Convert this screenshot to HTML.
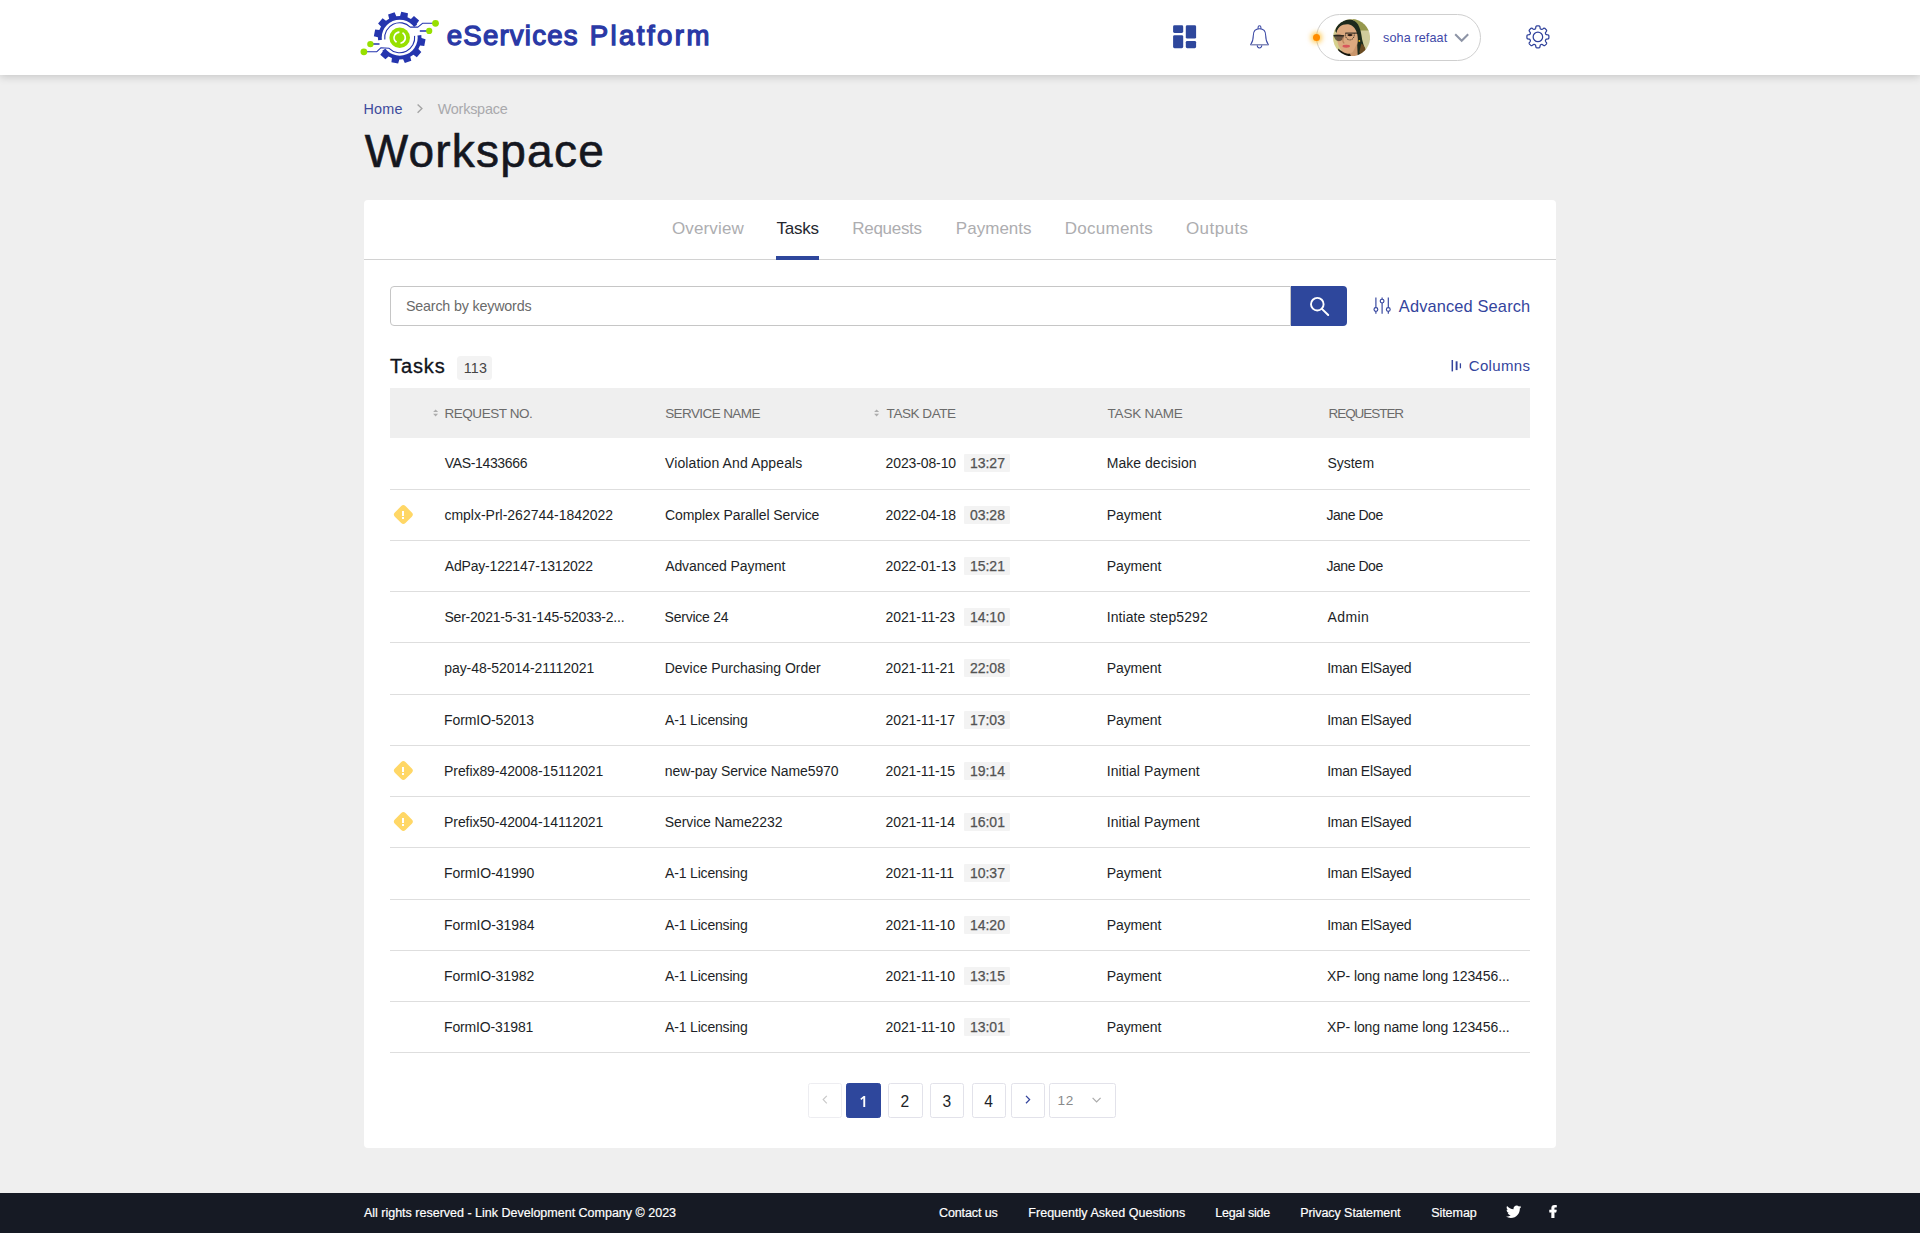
<!DOCTYPE html>
<html lang="en">
<head>
<meta charset="utf-8">
<title>Workspace</title>
<style>
*{box-sizing:border-box;margin:0;padding:0}
html,body{width:1920px;height:1233px;overflow:hidden;background:#efefef;font-family:"Liberation Sans",sans-serif;color:#1a1c26}
body{position:relative}
.abs{position:absolute}
.t{position:absolute;white-space:nowrap}
#hdr{position:absolute;left:0;top:0;width:1920px;height:75px;background:#fff;box-shadow:0 2px 8px rgba(0,0,0,.17)}
#userpill{position:absolute;left:1316px;top:14px;width:165px;height:47px;border:1px solid #cfcfcf;border-radius:24px;background:#fff}
#dot{position:absolute;left:1313px;top:34px;width:7px;height:7px;border-radius:50%;background:#ff8c00;box-shadow:0 0 5px 2px rgba(255,176,0,.65)}
#card{position:absolute;left:364px;top:200px;width:1192px;height:948px;background:#fff;border-radius:4px}
#tabline{position:absolute;left:364px;top:259px;width:1192px;height:1px;background:#d2d2d2}
#tabbar{position:absolute;left:776px;top:256px;width:43px;height:4px;background:#2e479c}
#sinput{position:absolute;left:390px;top:286px;width:901px;height:40px;border:1px solid #c6c6c6;border-radius:4px 0 0 4px;background:#fff}
#sbtn{position:absolute;left:1291px;top:286px;width:56px;height:40px;background:#2e479c;border-radius:0 4px 4px 0}
#cnt{position:absolute;left:457px;top:356px;width:35px;height:23.5px;border-radius:3.5px;background:#f3f3f3}
#thead{position:absolute;left:390px;top:388px;width:1140px;height:50px;background:#efefef}
.row{position:absolute;left:390px;width:1140px;height:1px;background:#dedede}
.tm{position:absolute;background:#f3f3f3;border-radius:1px}
.warn{position:absolute;width:14.7px;height:14.7px;border-radius:3px;background:#ffd766;transform:rotate(45deg)}
.wb{position:absolute;width:2px;height:5.6px;background:#fff}
.wd{position:absolute;width:2px;height:1.5px;background:#fff}
.pg{position:absolute;top:1083px;height:34.5px;border:1px solid #e2e2ea;border-radius:2.5px;background:#fff}
#ftr{position:absolute;left:0;top:1193px;width:1920px;height:40px;background:#161a24}
.chev{position:absolute}
</style>
</head>
<body>
<div id="hdr"></div>
<svg class="abs" style="left:0;top:0" width="460" height="74" viewBox="0 0 460 74">
<path d="M421.23,34.29 L425.09,32.58 L422.86,26.10 L418.77,27.13 L416.64,23.98 L419.13,20.57 L413.96,16.08 L410.93,19.01 L407.51,17.35 L407.96,13.15 L401.24,11.85 L400.08,15.90 L396.29,16.17 L394.58,12.31 L388.10,14.54 L389.13,18.63 L385.98,20.76 L382.57,18.27 L378.08,23.44 L381.01,26.47 L379.35,29.89 L375.15,29.44 L373.85,36.16 L377.90,37.32 L378.17,41.11 L374.31,42.82 L376.54,49.30 L380.63,48.27 L382.76,51.42 L380.27,54.83 L385.44,59.32 L388.47,56.39 L391.89,58.05 L391.44,62.25 L398.16,63.55 L399.32,59.50 L403.11,59.23 L404.82,63.09 L411.30,60.86 L410.27,56.77 L413.42,54.64 L416.83,57.13 L421.32,51.96 L418.39,48.93 L420.05,45.51 L424.25,45.96 L425.55,39.24 L421.50,38.08Z M417.70,37.70 A18.0,18.0 0 1 0 381.70,37.70 A18.0,18.0 0 1 0 417.70,37.70Z" fill="#2535ae" fill-rule="evenodd"/>
<path d="M399.7,37.7 L429.48,34.04 A30,30 0 0 0 423.66,19.65Z" fill="#fff"/><path d="M399.7,37.7 L369.92,41.36 A30,30 0 0 0 375.74,55.75Z" fill="#fff"/>
<g fill="none" stroke="#2535ae" stroke-width="1.1" stroke-linejoin="round">
<path d="M435.5,23.3 L422.5,23.3 L417.9,27.1 L410.31,27.09 A15.0,15.0 0 0 0 384.81,39.53"/>
<path d="M363.9,51.8 L376.6,51.8 L380.8,47.8 L389.09,48.31 A15.0,15.0 0 0 0 414.59,35.87"/>
<path d="M429.2,30.9 L419.8,30.9 M370.4,44.1 L379.5,44.1" stroke-width="1.5"/>
</g>
<g fill="#97e000">
<circle cx="435.5" cy="23.3" r="3.4"/><circle cx="429.2" cy="30.9" r="3.1"/>
<circle cx="370.4" cy="44.1" r="3.2"/><circle cx="363.9" cy="51.8" r="3.4"/>
<circle cx="399.7" cy="37.7" r="10.3"/>
</g>
<circle cx="399.7" cy="37.7" r="5.6" fill="none" stroke="#fff" stroke-width="1.7" stroke-dasharray="13.5 4.1" transform="rotate(-60 399.7 37.7)"/>
</svg>
<div id="userpill"></div>
<div id="dot"></div>
<svg class="abs" style="left:1160px;top:14px" width="120" height="46" viewBox="1160 14 120 46">
<g fill="#2e479c">
<rect x="1173.1" y="25.3" width="10.1" height="7.6" rx="1.4"/>
<rect x="1173.1" y="35.2" width="10.1" height="13" rx="1.4"/>
<rect x="1185.8" y="25.3" width="10.3" height="13.3" rx="1.4"/>
<rect x="1185.8" y="40.9" width="10.3" height="7.3" rx="1.4"/>
</g>
<g fill="none" stroke="#3a48a4" stroke-width="1.05" stroke-linejoin="round">
<path d="M1250.6,44.8 C1252.6,42.2 1253.3,40 1253.3,35.6 C1253.3,31 1256,28.8 1259.5,28.8 C1263,28.8 1265.7,31 1265.7,35.6 C1265.7,40 1266.4,42.2 1268.4,44.8 Z"/>
<path d="M1258.1,28.9 V27.3 A1.4,1.6 0 0 1 1260.9,27.3 V28.9"/>
<path d="M1257.2,45.3 A2.3,2.6 0 0 0 1261.8,45.3"/>
</g>
<path d="M1250.8,44.6 H1268.2" stroke="#8a90b8" stroke-width="1.1"/>
</svg>
<svg class="abs" style="left:1520px;top:20px" width="36" height="34" viewBox="1520 20 36 34">
<path d="M1537.90,25.90 L1538.19,25.90 L1538.48,25.92 L1538.76,25.94 L1539.05,25.98 L1539.33,26.05 L1539.60,26.19 L1539.83,26.50 L1539.99,27.07 L1540.08,27.82 L1540.18,28.39 L1540.32,28.72 L1540.50,28.90 L1540.69,29.01 L1540.89,29.11 L1541.09,29.19 L1541.29,29.27 L1541.50,29.35 L1541.72,29.40 L1541.97,29.40 L1542.30,29.27 L1542.78,28.93 L1543.37,28.48 L1543.89,28.18 L1544.27,28.13 L1544.56,28.22 L1544.81,28.37 L1545.04,28.54 L1545.26,28.73 L1545.47,28.92 L1545.68,29.12 L1545.88,29.33 L1546.07,29.54 L1546.26,29.76 L1546.43,29.99 L1546.58,30.24 L1546.67,30.53 L1546.62,30.91 L1546.32,31.43 L1545.87,32.02 L1545.53,32.50 L1545.40,32.83 L1545.40,33.08 L1545.45,33.30 L1545.53,33.51 L1545.61,33.71 L1545.69,33.91 L1545.79,34.11 L1545.90,34.30 L1546.08,34.48 L1546.41,34.62 L1546.98,34.72 L1547.73,34.81 L1548.30,34.97 L1548.61,35.20 L1548.75,35.47 L1548.82,35.75 L1548.86,36.04 L1548.88,36.32 L1548.90,36.61 L1548.90,36.90 L1548.90,37.19 L1548.88,37.48 L1548.86,37.76 L1548.82,38.05 L1548.75,38.33 L1548.61,38.60 L1548.30,38.83 L1547.73,38.99 L1546.98,39.08 L1546.41,39.18 L1546.08,39.32 L1545.90,39.50 L1545.79,39.69 L1545.69,39.89 L1545.61,40.09 L1545.53,40.29 L1545.45,40.50 L1545.40,40.72 L1545.40,40.97 L1545.53,41.30 L1545.87,41.78 L1546.32,42.37 L1546.62,42.89 L1546.67,43.27 L1546.58,43.56 L1546.43,43.81 L1546.26,44.04 L1546.07,44.26 L1545.88,44.47 L1545.68,44.68 L1545.47,44.88 L1545.26,45.07 L1545.04,45.26 L1544.81,45.43 L1544.56,45.58 L1544.27,45.67 L1543.89,45.62 L1543.37,45.32 L1542.78,44.87 L1542.30,44.53 L1541.97,44.40 L1541.72,44.40 L1541.50,44.45 L1541.29,44.53 L1541.09,44.61 L1540.89,44.69 L1540.69,44.79 L1540.50,44.90 L1540.32,45.08 L1540.18,45.41 L1540.08,45.98 L1539.99,46.73 L1539.83,47.30 L1539.60,47.61 L1539.33,47.75 L1539.05,47.82 L1538.76,47.86 L1538.48,47.88 L1538.19,47.90 L1537.90,47.90 L1537.61,47.90 L1537.32,47.88 L1537.04,47.86 L1536.75,47.82 L1536.47,47.75 L1536.20,47.61 L1535.97,47.30 L1535.81,46.73 L1535.72,45.98 L1535.62,45.41 L1535.48,45.08 L1535.30,44.90 L1535.11,44.79 L1534.91,44.69 L1534.71,44.61 L1534.51,44.53 L1534.30,44.45 L1534.08,44.40 L1533.83,44.40 L1533.50,44.53 L1533.02,44.87 L1532.43,45.32 L1531.91,45.62 L1531.53,45.67 L1531.24,45.58 L1530.99,45.43 L1530.76,45.26 L1530.54,45.07 L1530.33,44.88 L1530.12,44.68 L1529.92,44.47 L1529.73,44.26 L1529.54,44.04 L1529.37,43.81 L1529.22,43.56 L1529.13,43.27 L1529.18,42.89 L1529.48,42.37 L1529.93,41.78 L1530.27,41.30 L1530.40,40.97 L1530.40,40.72 L1530.35,40.50 L1530.27,40.29 L1530.19,40.09 L1530.11,39.89 L1530.01,39.69 L1529.90,39.50 L1529.72,39.32 L1529.39,39.18 L1528.82,39.08 L1528.07,38.99 L1527.50,38.83 L1527.19,38.60 L1527.05,38.33 L1526.98,38.05 L1526.94,37.76 L1526.92,37.48 L1526.90,37.19 L1526.90,36.90 L1526.90,36.61 L1526.92,36.32 L1526.94,36.04 L1526.98,35.75 L1527.05,35.47 L1527.19,35.20 L1527.50,34.97 L1528.07,34.81 L1528.82,34.72 L1529.39,34.62 L1529.72,34.48 L1529.90,34.30 L1530.01,34.11 L1530.11,33.91 L1530.19,33.71 L1530.27,33.51 L1530.35,33.30 L1530.40,33.08 L1530.40,32.83 L1530.27,32.50 L1529.93,32.02 L1529.48,31.43 L1529.18,30.91 L1529.13,30.53 L1529.22,30.24 L1529.37,29.99 L1529.54,29.76 L1529.73,29.54 L1529.92,29.33 L1530.12,29.12 L1530.33,28.92 L1530.54,28.73 L1530.76,28.54 L1530.99,28.37 L1531.24,28.22 L1531.53,28.13 L1531.91,28.18 L1532.43,28.48 L1533.02,28.93 L1533.50,29.27 L1533.83,29.40 L1534.08,29.40 L1534.30,29.35 L1534.51,29.27 L1534.71,29.19 L1534.91,29.11 L1535.11,29.01 L1535.30,28.90 L1535.48,28.72 L1535.62,28.39 L1535.72,27.82 L1535.81,27.07 L1535.97,26.50 L1536.20,26.19 L1536.47,26.05 L1536.75,25.98 L1537.04,25.94 L1537.32,25.92 L1537.61,25.90Z" fill="none" stroke="#2f419b" stroke-width="1.25"/>
<circle cx="1537.9" cy="36.9" r="4.75" fill="none" stroke="#2f419b" stroke-width="1.25"/>
</svg>
<svg class="abs" style="left:1450px;top:30px" width="24" height="16" viewBox="1450 30 24 16">
<path d="M1455.2,34.2 L1461.7,40.8 L1468.2,34.2" fill="none" stroke="#8d94a6" stroke-width="2"/>
</svg>
<svg class="abs" style="left:1333px;top:18.7px" width="37.1" height="37.3" viewBox="85 75 1038 1045">
<defs><clipPath id="av"><ellipse cx="604" cy="597" rx="519" ry="522"/></clipPath>
<filter id="bl" x="-10%" y="-10%" width="120%" height="120%"><feGaussianBlur stdDeviation="16"/></filter></defs>
<g clip-path="url(#av)"><g filter="url(#bl)">
<rect x="60" y="50" width="1100" height="1100" fill="#cfc98f"/>
<path d="M600,50 H1160 V420 H860 C800,260 700,150 600,50Z" fill="#96984d"/>
<path d="M860,400 H1160 V900 H960 C930,700 900,560 860,400Z" fill="#d0cc9c"/>
<path d="M60,560 H200 L260,1150 H60Z" fill="#d6d08c"/>
<path d="M150,420 C160,250 330,90 560,90 C760,100 850,300 880,520 C900,700 960,860 1010,1000 L900,1150 H700 L760,700 C740,480 660,300 520,250 C360,230 230,300 190,470Z" fill="#1d2a1e"/>
<path d="M880,760 C960,800 1000,900 1010,1000 L880,1140 L820,1000Z" fill="#6a4c20"/>
<path d="M185,470 C200,300 360,200 540,230 C700,270 780,460 780,640 C790,760 740,900 640,1000 C560,1060 420,1060 330,960 C230,840 170,640 185,470Z" fill="#dba97f"/>
<path d="M330,960 C420,1060 560,1060 640,1000 L760,760 L780,1150 H300Z" fill="#c9966c"/>
<path d="M230,900 C300,960 420,1060 560,1050 L600,1150 H240Z" fill="#15140f"/>
<path d="M100,520 C180,500 300,500 390,540 C380,640 330,700 250,700 C170,690 120,620 100,520Z" fill="#3a3126" opacity=".7"/>
<path d="M90,545 L400,545 M430,470 L770,470" stroke="#10120e" stroke-width="26" fill="none"/>
<path d="M440,480 C420,580 470,660 560,662 C640,660 690,580 680,480" stroke="#10120e" stroke-width="22" fill="none" stroke-dasharray="30 22"/>
<ellipse cx="560" cy="525" rx="75" ry="32" fill="#2a1c14"/>
<ellipse cx="455" cy="838" rx="105" ry="40" fill="#d8565b"/>
<circle cx="822" cy="688" r="26" fill="#f5c21a"/>
<path d="M365,600 C350,680 350,720 400,760" stroke="#b9835c" stroke-width="30" fill="none"/>
</g></g></svg>
<svg class="abs" style="left:414px;top:102px" width="12" height="14" viewBox="414 102 12 14"><path d="M417.6,104.4 L421.9,108.6 L417.6,112.8" fill="none" stroke="#a5a5a5" stroke-width="1.4"/></svg>
<div id="card"></div>
<div id="tabline"></div>
<div id="tabbar"></div>
<div id="sinput"></div>
<div id="sbtn"></div>
<svg class="abs" style="left:1305px;top:293px" width="30" height="26" viewBox="1305 293 30 26">
<circle cx="1317.3" cy="304.2" r="6.3" fill="none" stroke="#fff" stroke-width="1.9"/>
<path d="M1321.9,308.9 L1328.2,315" stroke="#fff" stroke-width="2" stroke-linecap="round"/></svg>
<svg class="abs" style="left:1370px;top:294px" width="24" height="24" viewBox="1370 294 24 24">
<g fill="none" stroke="#33449d" stroke-width="1.15">
<path d="M1375.9,297.5 V307.6 M1375.9,311.4 V313.7 M1382.1,297.5 V299.2 M1382.1,303 V313.7 M1388.3,297.5 V307.6 M1388.3,311.4 V313.7"/>
<circle cx="1375.9" cy="309.5" r="1.9"/><circle cx="1382.1" cy="301.1" r="1.9"/><circle cx="1388.3" cy="309.5" r="1.9"/>
</g></svg>
<svg class="abs" style="left:1448px;top:357px" width="18" height="18" viewBox="1448 357 18 18">
<g stroke="#33449d" stroke-width="1.5"><path d="M1452.3,360 V371.4"/><path d="M1456.6,361.3 V370.1" stroke-width="1.9"/><path d="M1460.4,363.3 V368.3" stroke-width="1.3"/></g></svg>
<div id="cnt"></div>
<div id="thead"></div>
<svg class="abs" style="left:431.5px;top:408px" width="8" height="10" viewBox="0 0 8 10"><path d="M1.1,4 L3.6,1.4 L6.1,4Z M1.1,5.8 L3.6,8.4 L6.1,5.8Z" fill="#adadad"/></svg>
<svg class="abs" style="left:873px;top:408px" width="8" height="10" viewBox="0 0 8 10"><path d="M1.1,4 L3.6,1.4 L6.1,4Z M1.1,5.8 L3.6,8.4 L6.1,5.8Z" fill="#adadad"/></svg>
<div class="tm" style="left:964px;top:454.25px;width:46px;height:17.5px"></div>
<div class="row" style="top:489px"></div>
<div class="tm" style="left:964px;top:506.25px;width:46px;height:17.5px"></div>
<div class="row" style="top:540px"></div>
<div class="warn" style="left:395.75px;top:507.20px"></div><div class="wb" style="left:402.1px;top:510.50px"></div><div class="wd" style="left:402.1px;top:517.40px"></div>
<div class="tm" style="left:964px;top:557.25px;width:46px;height:17.5px"></div>
<div class="row" style="top:591px"></div>
<div class="tm" style="left:964px;top:608.25px;width:46px;height:17.5px"></div>
<div class="row" style="top:642px"></div>
<div class="tm" style="left:964px;top:659.25px;width:46px;height:17.5px"></div>
<div class="row" style="top:694px"></div>
<div class="tm" style="left:964px;top:711.25px;width:46px;height:17.5px"></div>
<div class="row" style="top:745px"></div>
<div class="tm" style="left:964px;top:762.25px;width:46px;height:17.5px"></div>
<div class="row" style="top:796px"></div>
<div class="warn" style="left:395.75px;top:763.20px"></div><div class="wb" style="left:402.1px;top:766.50px"></div><div class="wd" style="left:402.1px;top:773.40px"></div>
<div class="tm" style="left:964px;top:813.25px;width:46px;height:17.5px"></div>
<div class="row" style="top:847px"></div>
<div class="warn" style="left:395.75px;top:814.20px"></div><div class="wb" style="left:402.1px;top:817.50px"></div><div class="wd" style="left:402.1px;top:824.40px"></div>
<div class="tm" style="left:964px;top:864.25px;width:46px;height:17.5px"></div>
<div class="row" style="top:899px"></div>
<div class="tm" style="left:964px;top:916.25px;width:46px;height:17.5px"></div>
<div class="row" style="top:950px"></div>
<div class="tm" style="left:964px;top:967.25px;width:46px;height:17.5px"></div>
<div class="row" style="top:1001px"></div>
<div class="tm" style="left:964px;top:1018.25px;width:46px;height:17.5px"></div>
<div class="row" style="top:1052px"></div>
<div class="pg" style="left:807.5px;width:34px;border-color:#ededf1"></div>
<div class="pg" style="left:846px;width:35px;background:#2e479c;border-color:#2e479c"></div>
<div class="pg" style="left:888px;width:35px"></div>
<div class="pg" style="left:930px;width:34px"></div>
<div class="pg" style="left:972px;width:34px"></div>
<div class="pg" style="left:1011px;width:34px"></div>
<div class="pg" style="left:1049px;width:67px"></div>
<svg class="abs" style="left:815px;top:1090px" width="300" height="20" viewBox="815 1090 300 20">
<path d="M826.8,1095.9 L823.2,1099.6 L826.8,1103.3" fill="none" stroke="#c9c9c9" stroke-width="1.2"/>
<path d="M865.2,1095.9 V1106.9 H863.3 V1098.3 L861.3,1100 L860.3,1098.8 L863.6,1095.9Z" fill="#fff"/>
<path d="M1026,1095.9 L1029.6,1099.6 L1026,1103.3" fill="none" stroke="#33449d" stroke-width="1.3"/>
<path d="M1092.6,1097.9 L1096.6,1101.9 L1100.6,1097.9" fill="none" stroke="#aaa" stroke-width="1.2"/>
</svg>
<div id="ftr"></div>
<svg class="abs" style="left:1505.9px;top:1203.8px" width="15.4" height="15.4" viewBox="0 0 512 512"><path fill="#fff" d="M459.37 151.716c.325 4.548.325 9.097.325 13.645 0 138.72-105.583 298.558-298.558 298.558-59.452 0-114.68-17.219-161.137-47.106 8.447.974 16.568 1.299 25.34 1.299 49.055 0 94.213-16.568 130.274-44.832-46.132-.975-84.792-31.188-98.112-72.772 6.498.974 12.995 1.624 19.818 1.624 9.421 0 18.843-1.3 27.614-3.573-48.081-9.747-84.143-51.98-84.143-102.985v-1.299c13.969 7.797 30.214 12.67 47.431 13.319-28.264-18.843-46.781-51.005-46.781-87.391 0-19.492 5.197-37.36 14.294-52.954 51.655 63.675 129.3 105.258 216.365 109.807-1.624-7.797-2.599-15.918-2.599-24.04 0-57.828 46.782-104.934 104.934-104.934 30.213 0 57.502 12.67 76.67 33.137 23.715-4.548 46.456-13.32 66.599-25.34-7.798 24.366-24.366 44.833-46.132 57.827 21.117-2.273 41.584-8.122 60.426-16.243-14.292 20.791-32.161 39.308-52.628 54.253z"/></svg>
<svg class="abs" style="left:1549.4px;top:1205.2px" width="8.1" height="12.9" viewBox="0 0 320 512" preserveAspectRatio="none"><path fill="#fff" stroke="#fff" stroke-width="22" d="M279.14 288l14.22-92.66h-88.91v-60.13c0-25.35 12.42-50.06 52.24-50.06h40.42V6.26S260.43 0 225.36 0c-73.22 0-121.08 44.38-121.08 124.72v70.62H22.89V288h81.39v224h100.17V288z"/></svg>
<div class="t" style="left:446.84px;top:19px;font-size:27.6px;line-height:33px;color:#2a39a6;letter-spacing:1.19px;-webkit-text-stroke:1.3px #2a39a6;">eServices</div>
<div class="t" style="left:589.69px;top:19px;font-size:27.6px;line-height:33px;color:#2a39a6;letter-spacing:2.43px;-webkit-text-stroke:1.3px #2a39a6;">Platform</div>
<div class="t" style="left:1383.01px;top:31px;font-size:12.6px;line-height:15px;color:#3f48a8;letter-spacing:0.12px;">soha refaat</div>
<div class="t" style="left:363.49px;top:101px;font-size:14.4px;line-height:17px;color:#3d4a9c;letter-spacing:0.17px;">Home</div>
<div class="t" style="left:437.66px;top:101px;font-size:14.4px;line-height:17px;color:#a9a9ac;letter-spacing:-0.21px;">Workspace</div>
<div class="t" style="left:364.72px;top:124px;font-size:46px;line-height:55px;color:#15171f;letter-spacing:1.22px;-webkit-text-stroke:0.6px #15171f;">Workspace</div>
<div class="t" style="left:671.97px;top:219px;font-size:17px;line-height:20px;color:#adadb0;letter-spacing:0.14px;">Overview</div>
<div class="t" style="left:852.26px;top:219px;font-size:17px;line-height:20px;color:#adadb0;letter-spacing:-0.29px;">Requests</div>
<div class="t" style="left:955.82px;top:219px;font-size:17px;line-height:20px;color:#adadb0;letter-spacing:0.03px;">Payments</div>
<div class="t" style="left:1064.84px;top:219px;font-size:17px;line-height:20px;color:#adadb0;letter-spacing:0.24px;">Documents</div>
<div class="t" style="left:1185.94px;top:219px;font-size:17px;line-height:20px;color:#adadb0;letter-spacing:0.43px;">Outputs</div>
<div class="t" style="left:776.58px;top:219px;font-size:17px;line-height:20px;color:#25272f;letter-spacing:-0.26px;">Tasks</div>
<div class="t" style="left:405.93px;top:298px;font-size:14.3px;line-height:17px;color:#6a6a6a;letter-spacing:-0.18px;">Search by keywords</div>
<div class="t" style="left:1398.84px;top:296px;font-size:16.4px;line-height:20px;color:#33449d;letter-spacing:0.14px;">Advanced Search</div>
<div class="t" style="left:390.09px;top:354px;font-size:20px;line-height:24px;color:#11131b;letter-spacing:0.88px;-webkit-text-stroke:0.35px #11131b;">Tasks</div>
<div class="t" style="left:463.71px;top:360px;font-size:14.3px;line-height:17px;color:#444;letter-spacing:0.25px;">113</div>
<div class="t" style="left:1468.83px;top:357px;font-size:15px;line-height:18px;color:#33449d;letter-spacing:0.31px;">Columns</div>
<div class="t" style="left:444.48px;top:406px;font-size:13.5px;line-height:16px;color:#6b6b6b;letter-spacing:-0.45px;">REQUEST NO.</div>
<div class="t" style="left:665.17px;top:406px;font-size:13.5px;line-height:16px;color:#6b6b6b;letter-spacing:-0.59px;">SERVICE NAME</div>
<div class="t" style="left:886.62px;top:406px;font-size:13.5px;line-height:16px;color:#6b6b6b;letter-spacing:-0.45px;">TASK DATE</div>
<div class="t" style="left:1107.62px;top:406px;font-size:13.5px;line-height:16px;color:#6b6b6b;letter-spacing:-0.24px;">TASK NAME</div>
<div class="t" style="left:1328.55px;top:406px;font-size:13.5px;line-height:16px;color:#6b6b6b;letter-spacing:-1.06px;">REQUESTER</div>
<div class="t" style="left:444.82px;top:455px;font-size:14px;line-height:17px;color:#1d1f27;letter-spacing:-0.35px;">VAS-1433666</div>
<div class="t" style="left:665.05px;top:455px;font-size:14px;line-height:17px;color:#1d1f27;letter-spacing:0.10px;">Violation And Appeals</div>
<div class="t" style="left:885.55px;top:455px;font-size:14px;line-height:17px;color:#1d1f27;letter-spacing:-0.12px;">2023-08-10</div>
<div class="t" style="left:969.90px;top:455px;font-size:14px;line-height:17px;color:#525252;-webkit-text-stroke:0.25px #525252;">13:27</div>
<div class="t" style="left:1106.75px;top:455px;font-size:14px;line-height:17px;color:#1d1f27;letter-spacing:0.03px;">Make decision</div>
<div class="t" style="left:1327.39px;top:455px;font-size:14px;line-height:17px;color:#1d1f27;letter-spacing:-0.00px;">System</div>
<div class="t" style="left:444.46px;top:507px;font-size:14px;line-height:17px;color:#1d1f27;letter-spacing:-0.01px;">cmplx-Prl-262744-1842022</div>
<div class="t" style="left:665.05px;top:507px;font-size:14px;line-height:17px;color:#1d1f27;letter-spacing:-0.09px;">Complex Parallel Service</div>
<div class="t" style="left:885.55px;top:507px;font-size:14px;line-height:17px;color:#1d1f27;letter-spacing:-0.12px;">2022-04-18</div>
<div class="t" style="left:969.90px;top:507px;font-size:14px;line-height:17px;color:#525252;-webkit-text-stroke:0.25px #525252;">03:28</div>
<div class="t" style="left:1106.75px;top:507px;font-size:14px;line-height:17px;color:#1d1f27;letter-spacing:-0.11px;">Payment</div>
<div class="t" style="left:1326.50px;top:507px;font-size:14px;line-height:17px;color:#1d1f27;letter-spacing:-0.46px;">Jane Doe</div>
<div class="t" style="left:444.82px;top:558px;font-size:14px;line-height:17px;color:#1d1f27;letter-spacing:-0.19px;">AdPay-122147-1312022</div>
<div class="t" style="left:665.15px;top:558px;font-size:14px;line-height:17px;color:#1d1f27;letter-spacing:-0.08px;">Advanced Payment</div>
<div class="t" style="left:885.55px;top:558px;font-size:14px;line-height:17px;color:#1d1f27;letter-spacing:-0.12px;">2022-01-13</div>
<div class="t" style="left:969.90px;top:558px;font-size:14px;line-height:17px;color:#525252;-webkit-text-stroke:0.25px #525252;">15:21</div>
<div class="t" style="left:1106.75px;top:558px;font-size:14px;line-height:17px;color:#1d1f27;letter-spacing:-0.11px;">Payment</div>
<div class="t" style="left:1326.50px;top:558px;font-size:14px;line-height:17px;color:#1d1f27;letter-spacing:-0.46px;">Jane Doe</div>
<div class="t" style="left:444.49px;top:609px;font-size:14px;line-height:17px;color:#1d1f27;letter-spacing:-0.22px;">Ser-2021-5-31-145-52033-2...</div>
<div class="t" style="left:664.61px;top:609px;font-size:14px;line-height:17px;color:#1d1f27;letter-spacing:-0.25px;">Service 24</div>
<div class="t" style="left:885.55px;top:609px;font-size:14px;line-height:17px;color:#1d1f27;letter-spacing:-0.12px;">2021-11-23</div>
<div class="t" style="left:969.90px;top:609px;font-size:14px;line-height:17px;color:#525252;-webkit-text-stroke:0.25px #525252;">14:10</div>
<div class="t" style="left:1106.67px;top:609px;font-size:14px;line-height:17px;color:#1d1f27;letter-spacing:0.10px;">Intiate step5292</div>
<div class="t" style="left:1327.60px;top:609px;font-size:14px;line-height:17px;color:#1d1f27;letter-spacing:0.37px;">Admin</div>
<div class="t" style="left:444.23px;top:660px;font-size:14px;line-height:17px;color:#1d1f27;letter-spacing:-0.06px;">pay-48-52014-21112021</div>
<div class="t" style="left:664.73px;top:660px;font-size:14px;line-height:17px;color:#1d1f27;letter-spacing:-0.02px;">Device Purchasing Order</div>
<div class="t" style="left:885.55px;top:660px;font-size:14px;line-height:17px;color:#1d1f27;letter-spacing:-0.12px;">2021-11-21</div>
<div class="t" style="left:969.90px;top:660px;font-size:14px;line-height:17px;color:#525252;-webkit-text-stroke:0.25px #525252;">22:08</div>
<div class="t" style="left:1106.75px;top:660px;font-size:14px;line-height:17px;color:#1d1f27;letter-spacing:-0.11px;">Payment</div>
<div class="t" style="left:1327.17px;top:660px;font-size:14px;line-height:17px;color:#1d1f27;letter-spacing:-0.26px;">Iman ElSayed</div>
<div class="t" style="left:444.04px;top:712px;font-size:14px;line-height:17px;color:#1d1f27;letter-spacing:-0.09px;">FormIO-52013</div>
<div class="t" style="left:665.10px;top:712px;font-size:14px;line-height:17px;color:#1d1f27;letter-spacing:-0.18px;">A-1 Licensing</div>
<div class="t" style="left:885.55px;top:712px;font-size:14px;line-height:17px;color:#1d1f27;letter-spacing:-0.12px;">2021-11-17</div>
<div class="t" style="left:969.90px;top:712px;font-size:14px;line-height:17px;color:#525252;-webkit-text-stroke:0.25px #525252;">17:03</div>
<div class="t" style="left:1106.75px;top:712px;font-size:14px;line-height:17px;color:#1d1f27;letter-spacing:-0.11px;">Payment</div>
<div class="t" style="left:1327.17px;top:712px;font-size:14px;line-height:17px;color:#1d1f27;letter-spacing:-0.26px;">Iman ElSayed</div>
<div class="t" style="left:444.04px;top:763px;font-size:14px;line-height:17px;color:#1d1f27;letter-spacing:-0.07px;">Prefix89-42008-15112021</div>
<div class="t" style="left:664.80px;top:763px;font-size:14px;line-height:17px;color:#1d1f27;letter-spacing:-0.09px;">new-pay Service Name5970</div>
<div class="t" style="left:885.55px;top:763px;font-size:14px;line-height:17px;color:#1d1f27;letter-spacing:-0.12px;">2021-11-15</div>
<div class="t" style="left:969.90px;top:763px;font-size:14px;line-height:17px;color:#525252;-webkit-text-stroke:0.25px #525252;">19:14</div>
<div class="t" style="left:1106.67px;top:763px;font-size:14px;line-height:17px;color:#1d1f27;letter-spacing:0.09px;">Initial Payment</div>
<div class="t" style="left:1327.17px;top:763px;font-size:14px;line-height:17px;color:#1d1f27;letter-spacing:-0.26px;">Iman ElSayed</div>
<div class="t" style="left:444.04px;top:814px;font-size:14px;line-height:17px;color:#1d1f27;letter-spacing:-0.07px;">Prefix50-42004-14112021</div>
<div class="t" style="left:664.76px;top:814px;font-size:14px;line-height:17px;color:#1d1f27;letter-spacing:-0.09px;">Service Name2232</div>
<div class="t" style="left:885.55px;top:814px;font-size:14px;line-height:17px;color:#1d1f27;letter-spacing:-0.12px;">2021-11-14</div>
<div class="t" style="left:969.90px;top:814px;font-size:14px;line-height:17px;color:#525252;-webkit-text-stroke:0.25px #525252;">16:01</div>
<div class="t" style="left:1106.67px;top:814px;font-size:14px;line-height:17px;color:#1d1f27;letter-spacing:0.09px;">Initial Payment</div>
<div class="t" style="left:1327.17px;top:814px;font-size:14px;line-height:17px;color:#1d1f27;letter-spacing:-0.26px;">Iman ElSayed</div>
<div class="t" style="left:444.04px;top:865px;font-size:14px;line-height:17px;color:#1d1f27;letter-spacing:-0.08px;">FormIO-41990</div>
<div class="t" style="left:665.10px;top:865px;font-size:14px;line-height:17px;color:#1d1f27;letter-spacing:-0.18px;">A-1 Licensing</div>
<div class="t" style="left:885.55px;top:865px;font-size:14px;line-height:17px;color:#1d1f27;letter-spacing:-0.12px;">2021-11-11</div>
<div class="t" style="left:969.90px;top:865px;font-size:14px;line-height:17px;color:#525252;-webkit-text-stroke:0.25px #525252;">10:37</div>
<div class="t" style="left:1106.75px;top:865px;font-size:14px;line-height:17px;color:#1d1f27;letter-spacing:-0.11px;">Payment</div>
<div class="t" style="left:1327.17px;top:865px;font-size:14px;line-height:17px;color:#1d1f27;letter-spacing:-0.26px;">Iman ElSayed</div>
<div class="t" style="left:444.04px;top:917px;font-size:14px;line-height:17px;color:#1d1f27;letter-spacing:-0.04px;">FormIO-31984</div>
<div class="t" style="left:665.10px;top:917px;font-size:14px;line-height:17px;color:#1d1f27;letter-spacing:-0.18px;">A-1 Licensing</div>
<div class="t" style="left:885.55px;top:917px;font-size:14px;line-height:17px;color:#1d1f27;letter-spacing:-0.12px;">2021-11-10</div>
<div class="t" style="left:969.90px;top:917px;font-size:14px;line-height:17px;color:#525252;-webkit-text-stroke:0.25px #525252;">14:20</div>
<div class="t" style="left:1106.75px;top:917px;font-size:14px;line-height:17px;color:#1d1f27;letter-spacing:-0.11px;">Payment</div>
<div class="t" style="left:1327.17px;top:917px;font-size:14px;line-height:17px;color:#1d1f27;letter-spacing:-0.26px;">Iman ElSayed</div>
<div class="t" style="left:444.04px;top:968px;font-size:14px;line-height:17px;color:#1d1f27;letter-spacing:-0.08px;">FormIO-31982</div>
<div class="t" style="left:665.10px;top:968px;font-size:14px;line-height:17px;color:#1d1f27;letter-spacing:-0.18px;">A-1 Licensing</div>
<div class="t" style="left:885.55px;top:968px;font-size:14px;line-height:17px;color:#1d1f27;letter-spacing:-0.12px;">2021-11-10</div>
<div class="t" style="left:969.90px;top:968px;font-size:14px;line-height:17px;color:#525252;-webkit-text-stroke:0.25px #525252;">13:15</div>
<div class="t" style="left:1106.75px;top:968px;font-size:14px;line-height:17px;color:#1d1f27;letter-spacing:-0.11px;">Payment</div>
<div class="t" style="left:1327.07px;top:968px;font-size:14px;line-height:17px;color:#1d1f27;letter-spacing:-0.10px;">XP- long name long 123456...</div>
<div class="t" style="left:444.04px;top:1019px;font-size:14px;line-height:17px;color:#1d1f27;letter-spacing:-0.16px;">FormIO-31981</div>
<div class="t" style="left:665.10px;top:1019px;font-size:14px;line-height:17px;color:#1d1f27;letter-spacing:-0.18px;">A-1 Licensing</div>
<div class="t" style="left:885.55px;top:1019px;font-size:14px;line-height:17px;color:#1d1f27;letter-spacing:-0.12px;">2021-11-10</div>
<div class="t" style="left:969.90px;top:1019px;font-size:14px;line-height:17px;color:#525252;-webkit-text-stroke:0.25px #525252;">13:01</div>
<div class="t" style="left:1106.75px;top:1019px;font-size:14px;line-height:17px;color:#1d1f27;letter-spacing:-0.11px;">Payment</div>
<div class="t" style="left:1327.07px;top:1019px;font-size:14px;line-height:17px;color:#1d1f27;letter-spacing:-0.10px;">XP- long name long 123456...</div>
<div class="t" style="left:900.60px;top:1092px;font-size:15.6px;line-height:19px;color:#1d1f27;">2</div>
<div class="t" style="left:942.40px;top:1092px;font-size:15.6px;line-height:19px;color:#1d1f27;">3</div>
<div class="t" style="left:984.20px;top:1092px;font-size:15.6px;line-height:19px;color:#1d1f27;">4</div>
<div class="t" style="left:1057.51px;top:1093px;font-size:13.6px;line-height:16px;color:#8a8a8a;letter-spacing:0.74px;">12</div>
<div class="t" style="left:363.91px;top:1206px;font-size:12.5px;line-height:15px;color:#fff;letter-spacing:0.00px;-webkit-text-stroke:0.2px #fff;">All rights reserved - Link Development Company © 2023</div>
<div class="t" style="left:938.99px;top:1206px;font-size:12.5px;line-height:15px;color:#fff;letter-spacing:-0.11px;-webkit-text-stroke:0.2px #fff;">Contact us</div>
<div class="t" style="left:1028.33px;top:1206px;font-size:12.5px;line-height:15px;color:#fff;letter-spacing:0.02px;-webkit-text-stroke:0.2px #fff;">Frequently Asked Questions</div>
<div class="t" style="left:1215.23px;top:1206px;font-size:12.5px;line-height:15px;color:#fff;letter-spacing:-0.21px;-webkit-text-stroke:0.2px #fff;">Legal side</div>
<div class="t" style="left:1300.23px;top:1206px;font-size:12.5px;line-height:15px;color:#fff;letter-spacing:-0.07px;-webkit-text-stroke:0.2px #fff;">Privacy Statement</div>
<div class="t" style="left:1431.20px;top:1206px;font-size:12.5px;line-height:15px;color:#fff;letter-spacing:-0.05px;-webkit-text-stroke:0.2px #fff;">Sitemap</div>
</body>
</html>
